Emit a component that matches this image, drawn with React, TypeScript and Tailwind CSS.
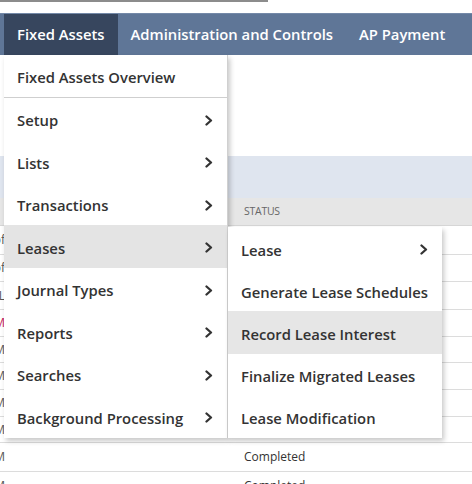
import React from "react";

const Chevron = () => (
  <svg width="8" height="11" viewBox="0 0 8 11" className="shrink-0">
    <path d="M1.5 1.5L6 5.5L1.5 9.5" fill="none" stroke="#333" strokeWidth="2.3" strokeLinecap="round" strokeLinejoin="round" />
  </svg>
);

const mainItems: { label: string; sub: boolean; active?: boolean; sep?: boolean }[] = [
  { label: "Fixed Assets Overview", sub: false, sep: true },
  { label: "Setup", sub: true },
  { label: "Lists", sub: true },
  { label: "Transactions", sub: true },
  { label: "Leases", sub: true, active: true },
  { label: "Journal Types", sub: true },
  { label: "Reports", sub: true },
  { label: "Searches", sub: true },
  { label: "Background Processing", sub: true },
];

const subItems: { label: string; sub: boolean; active?: boolean }[] = [
  { label: "Lease", sub: true },
  { label: "Generate Lease Schedules", sub: false },
  { label: "Record Lease Interest", sub: false, active: true },
  { label: "Finalize Migrated Leases", sub: false },
  { label: "Lease Modification", sub: false },
];

const rows: { left: string; pink?: boolean; status: string; h: string }[] = [
  { left: "of", status: "", h: "h-[29px]" },
  { left: "of", status: "", h: "h-[27px]" },
  { left: "AL", status: "", h: "h-[28px]" },
  { left: "PM", pink: true, status: "", h: "h-[27px]" },
  { left: "AM", status: "", h: "h-[26px]" },
  { left: "AM", status: "", h: "h-[27px]" },
  { left: "AM", status: "", h: "h-[27px]" },
  { left: "AM", status: "", h: "h-[26px]" },
  { left: "AM", status: "Completed", h: "h-[29px]" },
  { left: "AM", status: "Completed", h: "h-[28px]" },
];

export default function App() {
  return (
    <div
      className="relative w-[472px] h-[484px] overflow-hidden bg-white text-[#333]"
      style={{ fontFamily: '"Open Sans", "Noto Sans", sans-serif' }}
    >
      <div className="h-[2px] w-[268px] bg-[#8c8c8c]" />
      <div className="h-[11px]" />
      <nav className="flex h-[42px] bg-[#5f7697] pl-[4px] border-t border-[#7489a8]">
        <div className="flex items-center px-[13px] bg-[#37465e] text-white text-[14.8px] font-semibold whitespace-nowrap">
          Fixed Assets
        </div>
        <div className="flex items-center px-[13px] text-white text-[14.8px] font-semibold whitespace-nowrap">
          Administration and Controls
        </div>
        <div className="flex items-center px-[13px] text-white text-[14.8px] font-semibold whitespace-nowrap">
          AP Payment
        </div>
      </nav>

      <div className="h-[101px]" />
      <div className="h-[42px] bg-[#dfe5ef]" />
      <div className="flex h-[28px] items-center bg-[#e6e6e6] border-b border-[#d6d6d6]">
        <div className="w-[244px]" />
        <div className="text-[10.5px] text-[#666] tracking-tight">STATUS</div>
      </div>
      {rows.map((r, i) => (
        <div key={i} className={`flex ${r.h} items-center border-b border-[#dcdcdc]`}>
          <div className="w-[244px] flex">
            <div className="w-[5px] overflow-hidden flex justify-end">
              <span className={`text-[12px] whitespace-nowrap ${r.pink ? "text-[#c2185b]" : "text-[#555]"}`}>{r.left}</span>
            </div>
          </div>
          <div className="text-[12px] text-[#333]">{r.status}</div>
        </div>
      ))}

      {/* Main dropdown menu */}
      <div className="absolute left-[4px] top-[55px] w-[224px] bg-white border-r border-[#d0d0d0] shadow-[2px_3px_5px_rgba(0,0,0,0.22)]">
        {mainItems.map((it) => (
          <div
            key={it.label}
            className={`flex h-[42.5px] items-center justify-between pl-[13px] pr-[14px] pt-[3px] text-[14.8px] font-semibold whitespace-nowrap ${
              it.active ? "bg-[#e4e4e4]" : ""
            } ${it.sep ? "border-b border-[#cfcfcf]" : ""}`}
          >
            <span>{it.label}</span>
            {it.sub && <Chevron />}
          </div>
        ))}
      </div>

      {/* Submenu */}
      <div className="absolute left-[228px] top-[227px] w-[214px] bg-white shadow-[2px_3px_5px_rgba(0,0,0,0.22)]">
        {subItems.map((it) => (
          <div
            key={it.label}
            className={`flex h-[42.2px] items-center justify-between pl-[13px] pr-[14px] pt-[3px] text-[14.8px] font-semibold whitespace-nowrap ${
              it.active ? "bg-[#e6e6e6]" : ""
            }`}
          >
            <span>{it.label}</span>
            {it.sub && <Chevron />}
          </div>
        ))}
      </div>
    </div>
  );
}
